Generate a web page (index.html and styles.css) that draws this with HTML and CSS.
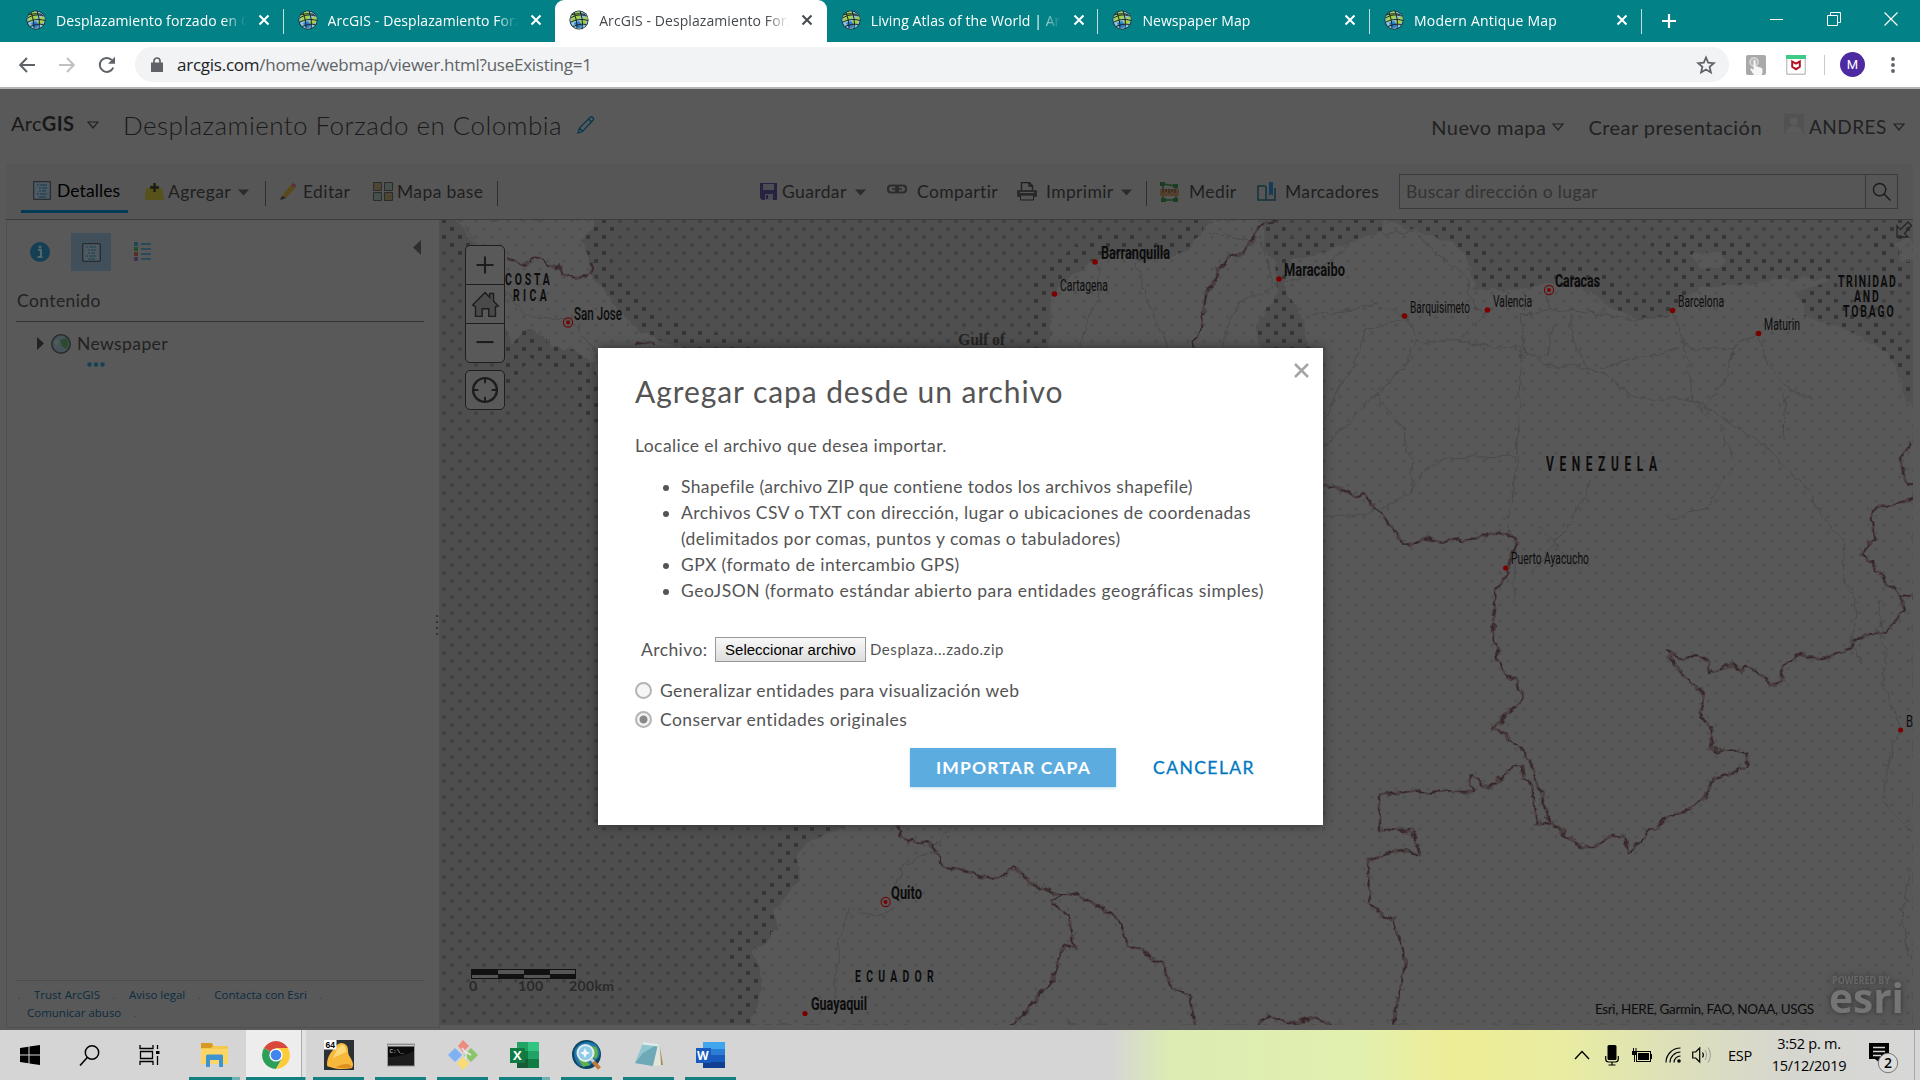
FILE: index.html
```html
<!DOCTYPE html>
<html lang="es">
<head>
<meta charset="utf-8">
<title>ArcGIS - Desplazamiento Forzado en Colombia</title>
<link rel="stylesheet" href="styles.css">
</head>
<body>
<svg class="defs" width="0" height="0">
  <symbol id="globe" viewBox="0 0 20 20">
    <circle cx="10" cy="10" r="9.600" fill="#1d2b2e"/>
    <circle cx="10" cy="10" r="8.800" fill="#8fc3e6"/>
    <path d="M2 7c2-4 6-6 9-5l1 5-4 4-5 1zM12 9l6-3c1 4 0 7-3 9l-4-1zM5 14l4 1v3c-2-1-3-2-4-4z" fill="#a3cf4a"/>
    <path d="M5 13l5-2 3 4-2 3c-3 0-5-2-6-5z" fill="#2b7fd0"/>
    <path d="M1.500 8c5-3 10-4 16-2M1 12.500c6-3 11-4 18-2M4 16.500c5-2 9-3 13-2M5 2.500c2 5 3 10 3 16M11 1c2 5 3 11 2 18M3 4.500c6-1 9-1 13 0" fill="none" stroke="#18262b" stroke-width="1"/>
  </symbol>
  <symbol id="x" viewBox="0 0 12 12"><path d="M1.500 1.500l9 9M10.500 1.500l-9 9" stroke="currentColor" stroke-width="2" fill="none"/></symbol>
  <symbol id="caret" viewBox="0 0 12 8"><path d="M1 1h10l-5 6z" fill="none" stroke="#222" stroke-width="1.200"/></symbol>
  <symbol id="down" viewBox="0 0 11 7"><path d="M0 .5h11l-5.500 6z" fill="#2b2b2b"/></symbol>
</svg>

<header class="tabs">
  <div class="tab"><svg class="fav"><use href="#globe"/></svg><span class="tab-title">Desplazamiento forzado en Colombia</span><svg class="tab-x"><use href="#x"/></svg></div>
  <div class="tab no-sep"><svg class="fav"><use href="#globe"/></svg><span class="tab-title">ArcGIS - Desplazamiento Forzado</span><svg class="tab-x"><use href="#x"/></svg></div>
  <div class="tab active"><svg class="fav"><use href="#globe"/></svg><span class="tab-title">ArcGIS - Desplazamiento Forzado</span><svg class="tab-x"><use href="#x"/></svg></div>
  <div class="tab"><svg class="fav"><use href="#globe"/></svg><span class="tab-title">Living Atlas of the World | ArcGIS</span><svg class="tab-x"><use href="#x"/></svg></div>
  <div class="tab"><svg class="fav"><use href="#globe"/></svg><span class="tab-title">Newspaper Map</span><svg class="tab-x"><use href="#x"/></svg></div>
  <div class="tab"><svg class="fav"><use href="#globe"/></svg><span class="tab-title wide">Modern Antique Map</span><svg class="tab-x"><use href="#x"/></svg></div>
  <svg class="newtab" viewBox="0 0 16 16"><path d="M8 1v14M1 8h14" stroke="#fff" stroke-width="2.200"/></svg>
  <div class="winctl">
    <svg viewBox="0 0 14 14"><path d="M0 7.500h13" stroke="#fff"/></svg>
    <svg viewBox="0 0 14 14"><path d="M.5 3.500h10v10h-10zM3.500 3.500v-3h10v10h-3" stroke="#fff" fill="none"/></svg>
    <svg viewBox="0 0 14 14"><path d="M.5 .5l13 13M13.500 .5l-13 13" stroke="#fff" stroke-width="1.200"/></svg>
  </div>
</header>

<nav class="navbar">
  <svg class="nav" viewBox="0 0 16 16"><path d="M16 8H1.500M8 1L1.200 8 8 15" fill="none" stroke="#5f6368" stroke-width="2"/></svg>
  <svg class="nav" viewBox="0 0 16 16"><path d="M0 8h14.500M8 1l6.800 7L8 15" fill="none" stroke="#bfc1c3" stroke-width="2"/></svg>
  <svg class="nav reload" viewBox="0 0 18 18"><path d="M15.300 11.500A7 7 0 1 1 14 4.200" fill="none" stroke="#5f6368" stroke-width="2"/><path d="M17 .8v7h-7z" fill="#5f6368"/></svg>
  <div class="omnibox">
    <svg class="lock" viewBox="0 0 12 15"><path d="M0 5.500h12v9.500H0z" fill="#5f6368"/><path d="M3 6V4a3 3 0 0 1 6 0v2" fill="none" stroke="#5f6368" stroke-width="1.700"/></svg>
    <span class="url t"><b>arcgis.com</b>/home/webmap/viewer.html?useExisting=1</span>
    <svg class="star" viewBox="0 0 20 20"><path d="M10 2.500l2.200 5.200 5.600.5-4.200 3.700 1.300 5.500L10 14.500l-4.900 2.900 1.300-5.500L2.200 8.200l5.600-.5z" fill="none" stroke="#5f6368" stroke-width="1.800"/></svg>
  </div>
  <div class="exts">
    <svg viewBox="0 0 20 20"><rect width="20" height="20" rx="2" fill="#a9a9a9"/><circle cx="8" cy="7" r="5" fill="#d0d0d0"/><circle cx="8" cy="7" r="3" fill="#b5b5b5"/><path d="M7.500 5.500q1-1 2 0V11l5 1.500q2 .5 2 2V18l-1 2H8l-4-6 1.500-.8 2 1.800z" fill="#f4f6f8"/></svg>
    <svg viewBox="0 0 20 20"><rect x=".7" y=".7" width="18.600" height="18.600" rx="1" fill="#fff" stroke="#c4c4c4" stroke-width="1.400"/><path d="M0 0h20v4H0z" fill="#3ecb86"/><path d="M6.200 6.500L10 8.700l3.800-2.200v5.300L10 14.200l-3.800-2.400z" fill="none" stroke="#b01020" stroke-width="2"/></svg>
  </div>
  <i class="navsep"></i>
  <span class="profile">M</span>
  <svg class="dots" viewBox="0 0 4 16"><circle cx="2" cy="2" r="1.900"/><circle cx="2" cy="8" r="1.900"/><circle cx="2" cy="14" r="1.900"/></svg>
</nav>

<main class="app">
  <header class="apphead">
    <span class="brand t">Arc<b>GIS</b></span>
    <svg class="caret"><use href="#caret"/></svg>
    <h1 class="t">Desplazamiento Forzado en Colombia</h1>
    <svg class="edit" viewBox="0 0 18 18"><path d="M1 17l1.500-5L13 1.500c1-1 2-.8 2.800 0s1 1.800 0 2.800L5.500 15.500zM11.500 3l3.200 3M2.500 12l3 3" fill="none" stroke="#08384f" stroke-width="1.300"/></svg>
    <div class="account">
      <span class="t">Nuevo mapa</span><svg class="caret"><use href="#caret"/></svg>
      <span class="present t">Crear presentación</span>
      <svg class="avatar" viewBox="0 0 20 20"><rect width="20" height="20" fill="#525252"/><circle cx="10" cy="8" r="4" fill="#5b5b5b"/><path d="M2 20c0-6 4-7 8-7s8 1 8 7z" fill="#5b5b5b"/></svg>
      <span class="user t">ANDRES</span><svg class="caret"><use href="#caret"/></svg>
    </div>
  </header>

  <div class="toolbar">
    <div class="tool current"><svg width="18" height="19" viewBox="0 0 18 19"><rect x=".7" y=".7" width="16.600" height="17.600" fill="#4d5963" stroke="#20242a"/><path d="M4 4h2M7 4h7M6 7h2M9 7h5M6 10h2M9 10h4M4 13h2M7 13h7M6 16h7" stroke="#123a4d"/></svg><span class="t">Detalles</span></div>
    <div class="tool add"><svg width="19" height="19" viewBox="0 0 19 19"><path d="M1 6h4v-3h8v3h4l2 12H0z" fill="#57511a"/><path d="M9.500 1v9M5 5.500h9" stroke="#1b1b1b" stroke-width="2.400"/></svg><span class="t">Agregar</span><svg class="down"><use href="#down"/></svg></div>
    <i class="vsep"></i>
    <div class="tool edit-tool"><svg width="16" height="18" viewBox="0 0 16 18"><path d="M2 13L11 2l4 3L6 15z" fill="#5a4a17"/><path d="M11 2l2-2 3 2-1 3z" fill="#55303a"/><path d="M0 17l2-4 4 2z" fill="#222"/></svg><span class="t">Editar</span></div>
    <div class="tool add"><svg width="20" height="19" viewBox="0 0 20 19"><path d="M.5 .5h8v8h-8zM11.500 10.500h8v8h-8z" fill="#4e4632" stroke="#2b2b2b"/><path d="M11.500 .5h8v8h-8zM.5 10.500h8v8h-8z" fill="#46504c" stroke="#2b2b2b"/></svg><span class="t">Mapa base</span></div>
    <i class="vsep"></i>
    <div class="tool save"><svg width="17" height="17" viewBox="0 0 17 17"><path d="M0 0h17v17H2l-2-2z" fill="#26223f"/><path d="M3 1h11v6H3z" fill="#4d4d55"/><path d="M5 11h8v6H5z" fill="#4d4d55"/><path d="M6 12h2v4H6z" fill="#26223f"/></svg><span class="t">Guardar</span><svg class="down"><use href="#down"/></svg></div>
    <div class="tool share"><svg class="raise" width="20" height="10" viewBox="0 0 20 10"><rect x="1" y="1.500" width="10" height="7" rx="3" fill="none" stroke="#2c2c2c" stroke-width="2"/><rect x="9" y="1.500" width="10" height="7" rx="3" fill="none" stroke="#2c2c2c" stroke-width="2"/><path d="M5 5h10" stroke="#2c2c2c" stroke-width="1.500"/></svg><span class="t">Compartir</span></div>
    <div class="tool print"><svg width="20" height="19" viewBox="0 0 20 19"><path d="M4.500 8V.7h8l3 3V8M12 1v3h3" fill="none" stroke="#1f1f1f" stroke-width="1.300"/><rect y="8" width="20" height="7" rx="1" fill="#2b2b2b"/><path d="M3 10.500h14" stroke="#555"/><path d="M3.500 13h13v5h-13z" fill="#555" stroke="#1f1f1f"/></svg><span class="t">Imprimir</span><svg class="down"><use href="#down"/></svg></div>
    <i class="vsep"></i>
    <div class="tool share"><svg width="19" height="20" viewBox="0 0 19 20"><path d="M3 2l13 2M3 18h13M3 2v16M16 4v14" stroke="#1b3d22" stroke-width="1.500"/><path d="M0 0h5v4H0zM13 2h5v4h-5zM1 16h5v4H1zM13 16h5v4h-5z" fill="#1b3d22"/><path d="M0 7h19v7H0z" fill="#54402c"/><path d="M3 7v4M6 7v3M9 7v4M12 7v3M15 7v4" stroke="#222"/></svg><span class="t">Medir</span></div>
    <div class="tool print"><svg width="19" height="20" viewBox="0 0 19 20"><path d="M1 4h6c2 0 2 1 2 1v13H1zM18 6v12H9" fill="none" stroke="#16333f" stroke-width="1.600"/><path d="M12 0h4v14l-2-2-2 2z" fill="#123c5a"/></svg><span class="t">Marcadores</span></div>
    <div class="search"><span class="t">Buscar dirección o lugar</span><svg viewBox="0 0 20 20"><circle cx="8" cy="8" r="6.500"/><path d="M12.500 12.500l7 7"/></svg></div>
  </div>

  <div class="work">
    <aside class="panel">
      <div class="ptabs">
        <svg class="info" viewBox="0 0 20 20"><circle cx="10" cy="10" r="10" fill="#143f55"/><path d="M8 8h3v6M7.500 15h5" stroke="#566" stroke-width="2" fill="none"/><circle cx="10" cy="5" r="1.500" fill="#566"/></svg>
        <span class="ptab"><svg width="19" height="19" viewBox="0 0 19 19"><rect x=".7" y=".7" width="17.600" height="17.600" rx="1" fill="#4f5962" stroke="#262b30" stroke-width="1.300"/><path d="M4 4h2M7 4h7M6 7h2M9 7h5M6 10h2M9 10h4M4 13h2M7 13h7M6 16h7" stroke="#1c4050"/></svg></span>
        <svg class="legend" width="17" height="20" viewBox="0 0 17 20"><path d="M0 0h4v4H0z" fill="#1d4a50"/><path d="M0 5h4v4H0z" fill="#274a2c"/><path d="M0 10h4v4H0z" fill="#55302a"/><path d="M0 15h4v4H0z" fill="#3e3050"/><path d="M7 2h10M7 7h10M7 12h10M7 17h10" stroke="#1c4659" stroke-width="1.500"/></svg>
        <svg class="collapse" width="8" height="15" viewBox="0 0 8 15"><path d="M8 0v15L0 7.500z" fill="#2f2f2f"/></svg>
      </div>
      <h2><span class="t">Contenido</span></h2>
      <div class="layer"><svg width="8" height="13" viewBox="0 0 8 13"><path d="M0 0l7 6.500-7 6.500z" fill="#222"/></svg><svg width="20" height="20" viewBox="0 0 20 20"><circle cx="10" cy="10" r="9.200" fill="#46525a" stroke="#2a2a2a" stroke-width="1.500"/><path d="M9 6l6-2c3 3 3 8 0 11l-4-3z" fill="#2c4a2e"/><path d="M3 8l4-3 1 4-3 3z" fill="#4f5f55"/></svg><span class="t">Newspaper</span></div>
      <svg class="more" width="18" height="5" viewBox="0 0 18 5"><circle cx="2.500" cy="2.500" r="2.200"/><circle cx="9" cy="2.500" r="2.200"/><circle cx="15.500" cy="2.500" r="2.200"/></svg>
      <footer class="links">
        <div><i>.</i><a class="t">Trust ArcGIS</a><i>.</i><a class="t">Aviso legal</a><i>.</i><a class="t">Contacta con Esri</a><i>.</i></div>
        <div class="second"><a class="t">Comunicar abuso</a><i>.</i></div>
      </footer>
      <span class="grip"></span>
    </aside>
    <section class="map">
      <svg class="canvas" width="1473" height="805" viewBox="440 220 1473 805">
        <defs>
          <pattern id="seadots" width="16" height="16" patternUnits="userSpaceOnUse"><circle cx="4" cy="5" r="2" fill="#404040"/><circle cx="12" cy="13" r="2" fill="#404040"/></pattern>
          <pattern id="coastdots" width="16" height="16" patternUnits="userSpaceOnUse"><rect x="2" y="3" width="4" height="4" rx="1" fill="#353535"/><rect x="10" y="11" width="4" height="4" rx="1" fill="#353535"/></pattern>
          <pattern id="landdots" width="16" height="16" patternUnits="userSpaceOnUse"><circle cx="4" cy="5" r="1.900" fill="#505050"/><circle cx="12" cy="13" r="1.900" fill="#505050"/></pattern>
          <filter id="rough" x="-5%" y="-5%" width="110%" height="110%"><feTurbulence type="fractalNoise" baseFrequency=".09" numOctaves="3" seed="4"/><feDisplacementMap in="SourceGraphic" scale="9" xChannelSelector="R" yChannelSelector="G"/></filter>
          <linearGradient id="sea" x1="0" x2="1"><stop offset="0" stop-color="#4e4e4e"/><stop offset="1" stop-color="#515151"/></linearGradient>
          <g id="land">
            <path d="M455 220L469 236 490 268 506 293 500 320 512 345 524 330 533 328 550 345 575 350 594 362 600 400H760L740 360 680 348 643 333 624 317 604 290 592 273 584 240 594 220z"/>
            <path d="M750 1025L759 1000 761 973 751 950 767 943 777 927 775 910 801 877 796 853 804 842 842 828 880 780 1000 600 1040 400 1049 347 1053 293 1072 277 1096 258 1120 255 1150 262 1190 250 1204 228 1212 220H1264L1262 250 1275 262 1278 288 1256 327 1262 355H1312L1298 310 1284 288 1290 262 1330 250 1360 240 1383 231 1385 220H1390L1411 230 1435 237 1454 243 1468 260 1475 290 1510 290 1553 285 1590 290 1609 307 1642 320 1671 313 1699 287 1737 285 1789 278 1831 280 1798 293 1803 317 1841 327 1864 340 1888 353 1902 383 1909 403 1913 410V1025z"/>
            <path d="M1690 256l20-5 17 6-6 10-20 2z"/><path d="M1895 243l12-6 6 3v20l-10 4z"/>
          </g>
          <g id="borders" fill="none" stroke-linejoin="round">
            <path d="M505 258L523 265 537 257 553 265 564 274 579 279 592 273V262M638 346L640 342 655 345"/>
            <path d="M1277 220L1260 225 1251 240 1244 253 1232 255 1218 270 1206 297 1201 327 1192 350"/>
            <path d="M1315 484L1333 486 1357 496 1364 493 1404 543 1411 545 1423 538 1444 542 1480 538 1494 532 1510 535 1516 543 1510 557 1508 575 1494 590 1495 610 1493 633 1498 657 1507 677 1515 678 1524 698 1492 730 1504 732 1515 743 1529 757 1535 777 1543 800 1549 820 1580 847 1594 847 1611 836 1623 836 1627 853 1647 833 1666 818 1692 808 1709 793 1711 780 1747 768V752L1711 750 1712 733 1700 712 1704 693 1684 677 1666 650 1678 658 1704 657 1709 671 1733 665 1741 672 1745 665 1762 673 1772 686 1784 682V663L1802 653 1819 660 1851 648 1855 640 1872 633H1884L1892 623 1906 610 1900 597 1860 552 1874 540 1871 510 1888 505 1916 498"/>
            <path d="M1900 597l16-1M1911 443L1900 460 1906 483 1916 483"/>
            <path d="M1549 822L1536 826 1537 820 1532 785 1524 780 1522 765 1515 767 1500 778 1489 788 1473 775 1469 785 1473 793 1395 792 1380 794V830L1410 830 1416 838 1420 856 1400 850 1369 860 1370 905 1392 920 1404 950 1405 968 1392 1028"/>
            <path d="M890 815L895 825 906 840 933 845 943 867 960 869 981 877 1005 877 1013 867 1037 887 1061 895 1077 894 1110 913 1120 923 1128 945 1163 963 1171 988 1190 997 1195 1028M1061 897L1051 900 1072 923 1074 947 1064 945 1053 980 1010 1028M1252 1028L1270 1015 1290 1024 1315 1018 1336 1028"/>
          </g>
        </defs>
        <rect x="440" y="220" width="1473" height="805" fill="url(#sea)"/>
        <rect x="440" y="220" width="1473" height="805" fill="url(#seadots)"/>
        <use href="#land" fill="url(#coastdots)" stroke="url(#coastdots)" stroke-width="44"/>
        <use href="#land" fill="#585858" filter="url(#rough)"/>
        <use href="#land" fill="url(#landdots)"/>
        <g fill="none" stroke="#474747" stroke-width=".9" filter="url(#rough)">
          <path d="M1209 233l50 10 12 30 2 15M1274 288l-35 14-15 30v20M1360 230l-20 25-35 22-20 5M1383 235l28-4 30 25 26 22 7 30 13 5M1312 315l40-5 25-6 28 12 12 20M1417 342h45l20 3 40 4 14 8 10 9h35l25 9 22 18 25 8 28-3 20 5 35 25 28 15 25 30 22 18 12 28 22 20-3 35 15 30-6 40 12 20M1405 318l-40 12-10 35-20 30-12 30M1417 340l-15 30-30 28-48 50M1372 388l30 40 10 35v30l-46 22-43 2M1412 490l15-22 22-10 65-2M1522 350l-2 25-3 70-5 60-8 15 10 20v60M1549 290l-1 20-28 5 5 40M1549 310l40 2 45 8 35-5M1672 312l12 30 10 60 14 15M1680 342l20 8h30l28-17M1758 335l10 30 22 25 25 10M1735 345l-10 35-22 30M1600 368l50-12 30-8M1580 570l-40-45M1720 425l15 40-18 22-8 20-40 12M1590 480l-18 40-18 24-20 25M1785 390l-2 50M1545 355l10-30M1570 315l6 35 12 20M1487 312l-25 25"/>
          <path d="M1879 600l2 35 5 20-4 30 10 20 8 25-8 15-10 55 20 20 12 14M1910 870l-8 40 8 50M1097 262l3 30-12 25-8 30M1136 262l10 35 22 50M505 290l20 25 40 5 10 5 15 20 15 20M955 825l-25 25-28 18-4 18M890 910l-10 8-30-10-10 30-6 60M465 225l15 25"/>
        </g>
        <g filter="url(#rough)"><use href="#borders" stroke="#4b3f41" stroke-width="3"/><use href="#borders" stroke="#34272a" stroke-width="1.500" stroke-dasharray="9 5"/></g>
        <g fill="#7a0000">
          <circle cx="1095" cy="262" r="2.800"/><circle cx="1054.500" cy="294" r="2.800"/><circle cx="1279" cy="279" r="2.800"/><circle cx="1404.500" cy="316" r="2.800"/><circle cx="1487.500" cy="310" r="2.800"/><circle cx="1672.600" cy="310.500" r="2.800"/><circle cx="1758.600" cy="333.500" r="2.800"/><circle cx="1505.500" cy="568" r="2.500"/><circle cx="1900.600" cy="730" r="2.500"/><circle cx="805" cy="1013.500" r="2.600"/>
          <circle cx="568" cy="322.500" r="1.900"/><circle cx="1549" cy="290" r="1.900"/><circle cx="885.600" cy="902" r="1.900"/>
          <g fill="none" stroke="#6d0808" stroke-width="1.100"><circle cx="568" cy="322.500" r="4.600"/><circle cx="1549" cy="290" r="4.600"/><circle cx="885.600" cy="902" r="4.600"/></g>
        </g>
        <g class="country">
          <text transform="translate(505 285) scale(.65 1)" textLength="69">COSTA</text>
          <text transform="translate(513 301) scale(.65 1)" textLength="52">RICA</text>
          <text transform="translate(1838 287) scale(.65 1)" textLength="89">TRINIDAD</text>
          <text transform="translate(1854 302) scale(.65 1)" textLength="38">AND</text>
          <text transform="translate(1843 317) scale(.65 1)" textLength="78">TOBAGO</text>
          <text transform="translate(855 982) scale(.65 1)" textLength="121">ECUADOR</text>
          <text class="big" transform="translate(1546 471) scale(.6 1)" textLength="185">VENEZUELA</text>
        </g>
        <g class="city major">
          <text x="574" y="320" textLength="48" lengthAdjust="spacingAndGlyphs" font-weight="500">San Jose</text><text x="1101" y="259" textLength="69" lengthAdjust="spacingAndGlyphs">Barranquilla</text><text x="1284" y="276" textLength="61" lengthAdjust="spacingAndGlyphs">Maracaibo</text><text x="1555" y="287" textLength="45" lengthAdjust="spacingAndGlyphs">Caracas</text><text x="891" y="899" textLength="31" lengthAdjust="spacingAndGlyphs">Quito</text><text x="811" y="1010" textLength="56" lengthAdjust="spacingAndGlyphs">Guayaquil</text>
        </g>
        <g class="city">
          <text x="1060" y="291" textLength="48" lengthAdjust="spacingAndGlyphs">Cartagena</text><text x="1410" y="313" textLength="60" lengthAdjust="spacingAndGlyphs">Barquisimeto</text><text x="1493" y="307" textLength="39" lengthAdjust="spacingAndGlyphs">Valencia</text><text x="1678" y="307" textLength="46" lengthAdjust="spacingAndGlyphs">Barcelona</text><text x="1764" y="330" textLength="36" lengthAdjust="spacingAndGlyphs">Maturin</text><text x="1511" y="564" textLength="78" lengthAdjust="spacingAndGlyphs">Puerto Ayacucho</text><text x="1906" y="727" textLength="7" lengthAdjust="spacingAndGlyphs">B</text>
        </g>
        <text class="gulf" x="958" y="345" textLength="47">Gulf of</text>
        <g class="scale"><rect x="471.500" y="969.500" width="104" height="9" fill="#555" stroke="#111"/><path d="M472 970h26v5h-26zM498 974h26v5h-26zM524 970h26v5h-26zM550 974h25v5h-25z" fill="#111"/><text x="469" y="991">0</text><text x="518" y="991" textLength="25">100</text><text x="569" y="991" textLength="45">200km</text></g>
        <text class="attrib" x="1595" y="1014" textLength="219">Esri, HERE, Garmin, FAO, NOAA, USGS</text>
        <g class="logo"><text class="pow" x="1832" y="984" textLength="58" lengthAdjust="spacingAndGlyphs">POWERED BY</text><text class="esri" x="1829" y="1013" textLength="75" lengthAdjust="spacingAndGlyphs">esri</text></g>
        <path d="M1897 226v11h11l-3.500-3.500 7-8-3.500-3.500-7.500 7.500z" fill="none" stroke="#262626" stroke-width="1.300"/>
      </svg>
      <div class="zoom">
        <svg viewBox="0 0 40 38"><path d="M20 10v18M11 19h18" stroke="#1d1d1d" stroke-width="2.200"/></svg>
        <svg viewBox="0 0 40 38"><path d="M7 20L20 7l5 5V8h4v8l5 5-3 1v10h-7v-8h-7v8h-7V22z" fill="#4a4a4a" stroke="#1d1d1d" stroke-width="1.500"/></svg>
        <svg viewBox="0 0 40 38"><path d="M11 18h18" stroke="#1d1d1d" stroke-width="2.200"/></svg>
      </div>
      <div class="zoom locate"><svg viewBox="0 0 40 38"><circle cx="20" cy="19" r="12.500" fill="none" stroke="#1d1d1d" stroke-width="2.500"/><path d="M20 6v6M20 26v6M7 19h6M27 19h6" stroke="#1d1d1d" stroke-width="2"/></svg></div>
    </section>
  </div>
</main>

<section class="dialog">
  <svg class="close" viewBox="0 0 15 15"><path d="M1 1l13 13M14 1L1 14" stroke="#a5a5a5" stroke-width="2.500"/></svg>
  <h3>Agregar capa desde un archivo</h3>
  <p>Localice el archivo que desea importar.</p>
  <ul>
    <li>Shapefile (archivo ZIP que contiene todos los archivos shapefile)</li>
    <li>Archivos CSV o TXT con dirección, lugar o ubicaciones de coordenadas<br>(delimitados por comas, puntos y comas o tabuladores)</li>
    <li>GPX (formato de intercambio GPS)</li>
    <li>GeoJSON (formato estándar abierto para entidades geográficas simples)</li>
  </ul>
  <div class="file"><label>Archivo:</label><button>Seleccionar archivo</button><span class="fname">Desplaza...zado.zip</span></div>
  <div class="radio"><i></i><span>Generalizar entidades para visualización web</span></div>
  <div class="radio on"><i></i><span>Conservar entidades originales</span></div>
  <div class="actions"><span class="import">IMPORTAR CAPA</span><span class="cancel">CANCELAR</span></div>
</section>

<footer class="taskbar">
  <div class="sys">
    <svg width="20" height="20" viewBox="0 0 20 20"><path d="M0 3l8.500-1.200V9.500H0zM9.500 1.600L20 0v9.500H9.500zM0 10.500h8.500v7.700L0 17zM9.500 10.500H20V20L9.500 18.400z"/></svg>
    <svg width="21" height="21" viewBox="0 0 21 21"><circle cx="13" cy="7.500" r="6.700" fill="none" stroke="#000" stroke-width="1.500"/><path d="M8.300 12.500L1 20.500" stroke="#000" stroke-width="1.600"/></svg>
    <svg width="22" height="20" viewBox="0 0 22 20"><path d="M1 0v3.500h13V0M1 20v-3.500h13V20M1.500 6.500h12v7h-12zM18.500 0v4M18.500 11v9" fill="none" stroke="#000" stroke-width="1.300"/><path d="M17 6h3.500v3H17z"/></svg>
  </div>
  <div class="apps">
    <span class="multi"><svg viewBox="0 0 30 30"><path d="M1 3h11l2 3h14v18H1z" fill="#f6c94e"/><path d="M1 3h11l1 3-2 2H1z" fill="#d69a22"/><path d="M1 9h27v15H1z" fill="#fbd667"/><path d="M6 16q0-1.500 1.500-1.500h14q1.500 0 1.500 1.500v11h-4v-7h-9v7H6z" fill="#3f93cf"/></svg></span>
    <span class="active multi"><svg viewBox="0 0 30 30"><circle cx="15" cy="15" r="14" fill="#fff"/><path d="M15 15L2.900 8A14 14 0 0 1 27.100 8H15z" fill="#d8493b"/><path d="M15 15L2.900 8A14 14 0 0 0 15 29l6-10.500z" fill="#2e9f58"/><path d="M15 8h12.100A14 14 0 0 1 15 29l6-10.500z" fill="#fccb3a"/><circle cx="15" cy="15" r="6.600" fill="#fff"/><circle cx="15" cy="15" r="5.300" fill="#4484ef"/></svg></span>
    <span><svg viewBox="0 0 30 30"><rect width="30" height="30" fill="#2c3137"/><path d="M3 25C3 15 8 12 12 6c3-4 8-4 11 0 2 4 0 7 3 11 3 5 4 8 2 11-8 2-18 1-22-1-2 0-3-1-3-2z" fill="#f8b83c"/><path d="M9 18c2-5 4-9 8-13 4-1 5 4 5 7" fill="#fdd87a"/><path d="M12 27c6 2 12 1 16 0-2-4-8-4-16 0z" fill="#e08e1e"/><rect width="12.500" height="9.500" fill="#fff"/><text x="1.500" y="8" font-size="8.500" font-weight="700" font-family="Liberation Sans">64</text></svg></span>
    <span><svg viewBox="0 0 30 30"><rect x="1.500" y="4" width="27" height="22" fill="#0b0b0b" stroke="#9a9a9a"/><path d="M2 4.500h26v2H2z" fill="#c9c9c9"/><path d="M2 17q14 0 26-6v14H2z" fill="#1d1d1d"/><text x="3.500" y="12.500" font-size="6" fill="#ddd" font-family="Liberation Mono">C:\_</text></svg></span>
    <span><svg viewBox="0 0 30 30"><path d="M15 0l6 6-6 6-5-6z" fill="#f08a80"/><path d="M7 8l7 7-7 7-7-7z" fill="#7fb2f5"/><path d="M23 8l7 7-7 7-7-7z" fill="#8cc468"/><path d="M15 17l6 6.500-6 6.500-6-6.500z" fill="#fbdc74"/><path d="M14 8l4 5v6M18 12l5 3" stroke="#e8e8e8" stroke-width="1.500" fill="none"/></svg></span>
    <span class="multi"><svg viewBox="0 0 30 30"><path d="M7 2h22v26H7z" fill="#21a366"/><path d="M18 2h11v9H18z" fill="#33c481"/><path d="M7 11h11v8H7zM18 19h11v9H18z" fill="#107c41"/><path d="M7 19h11v9H7z" fill="#185c37"/><path d="M0 8h15v15H0z" fill="#107c41"/><text x="3" y="20" font-size="13" font-weight="700" fill="#fff" font-family="Open Sans">X</text></svg></span>
    <span><svg viewBox="0 0 30 30"><circle cx="14.500" cy="14.500" r="14.500" fill="#0d4566"/><path d="M3 9c4-7 14-9 20-5 5 4 6 10 3 14l-9 8H8C3 22 1 15 3 9z" fill="#2379ad"/><path d="M19 6l5 1c3 4 2 9 0 12l-5-3zM6 19l8 1 4 5-7 2z" fill="#5fb04c"/><circle cx="13.500" cy="13" r="8" fill="#8fcbe6" stroke="#e2edf2" stroke-width="2"/><path d="M13 8l1.500 3.500L18 13l-3.500 1.500L13 18l-1.500-3.500L8 13l3.500-1.500z" fill="#f4fbff"/><path d="M19 19l3 3" stroke="#ccc" stroke-width="3"/><path d="M21.500 22l6 6.500" stroke="#c17a3a" stroke-width="4"/></svg></span>
    <span><svg viewBox="0 0 30 30"><path d="M9 3l15 2-5 21-18-3z" fill="#8fc5cf"/><path d="M24 4l5 21-11 1z" fill="#e3e4dc"/><path d="M26 7l3 18h-2z" fill="#a08c50"/><path d="M24 4l-5 22-18-3 8-10z" fill="#6fa9b8"/><path d="M9 2l16 2-.5 2.500L8 4.500z" fill="#dfe8ea"/></svg></span>
    <span><svg viewBox="0 0 30 30"><path d="M7 2h22v26H7z" fill="#2b7cd3"/><path d="M7 2h22v7H7z" fill="#41a5ee"/><path d="M7 15h22v7H7z" fill="#185abd"/><path d="M7 22h22v6H7z" fill="#103f91"/><path d="M0 8h15v15H0z" fill="#185abd"/><text x="1" y="20" font-size="12" font-weight="700" fill="#fff" font-family="Open Sans">W</text></svg></span>
  </div>
  <div class="tray">
    <svg width="16" height="10" viewBox="0 0 16 10"><path d="M1 9l7-7.500L15 9" fill="none" stroke="#000" stroke-width="1.400"/></svg>
    <svg class="mic" width="14" height="21" viewBox="0 0 14 21"><rect x="2.500" width="9" height="15" rx="1.500"/><path d="M.7 11v3c0 2 1 3 3 3h6.600c2 0 3-1 3-3v-3M7 17v3M3.500 20h7" fill="none" stroke="#000" stroke-width="1.200"/></svg>
    <svg class="bat" width="20" height="15" viewBox="0 0 20 15"><rect x="4.500" y="3.500" width="14" height="10" fill="none" stroke="#000"/><path d="M6 5h11v7H6zM18.500 6H20v5h-1.500zM0 3h5v4H3v7H2V7H0zM1 0h1v3H1zM3.500 0h1v3h-1z"/></svg>
    <svg class="wifi" width="16" height="16" viewBox="0 0 16 16"><g fill="none" stroke="#000" stroke-width="1.200"><path d="M1 15.500A14.500 14.500 0 0 1 15.500 1M5 15.500A10.500 10.500 0 0 1 15.500 5M9 15.500A6.500 6.500 0 0 1 15.500 9"/></g><circle cx="14" cy="14" r="1.800"/></svg>
    <svg class="vol" width="20" height="18" viewBox="0 0 20 18"><path d="M.7 6h3l4-4v14l-4-4h-3z" fill="none" stroke="#000" stroke-width="1.200"/><path d="M10.500 6.500c1 1.500 1 3.500 0 5" stroke="#000" fill="none" stroke-width="1.200"/><path d="M13 4c2 3 2 7 0 10M16 1.500c3 4.500 3 10.500 0 15" stroke="#999" fill="none"/></svg>
    <span class="lang t">ESP</span>
    <div class="clock"><span class="t">3:52 p. m.</span><span class="t">15/12/2019</span></div>
    <svg class="notif" width="31" height="32" viewBox="0 0 31 32"><path d="M0 0h20v16H11v4l-5-4H0z"/><path d="M4 4.500h12M4 8.500h12M4 12.500h8" stroke="#d5d5d5" stroke-width="1.300"/><circle cx="19" cy="20" r="9.700" fill="#dcdcdc" stroke="#777"/><text x="15" y="25.200" font-family="Open Sans" font-size="14" font-weight="600">2</text></svg>
    <i class="peek"></i>
  </div>
</footer>
</body>
</html>
```
FILE: styles.css
```css
* { box-sizing: border-box; }
body { margin: 0; width: 1920px; height: 1080px; overflow: hidden; display: flex; flex-direction: column; font-family: "Lato", sans-serif; background: #595959; color: #222; position: relative; }
svg { display: block; flex: none; }
.t { white-space: nowrap; display: inline-block; }
.defs { position: absolute; }
h1, h2, h3, p, ul { margin: 0; padding: 0; font-weight: 400; }

.tabs { height: 42px; background: #028287; display: flex; padding-left: 12px; color: #fff; flex: none; font-family: "Open Sans", sans-serif; font-size: 14px; letter-spacing: .08px; }
.tab { width: 271.600px; height: 42px; display: flex; align-items: center; padding: 0 0 2px 14px; position: relative; }
.tab::after { content: ""; position: absolute; right: 0; top: 9px; width: 1px; height: 25px; background: #bfe0e1; }
.tab.no-sep::after { display: none; }
.tab.active { background: #fff; color: #45494d; border-radius: 9px 9px 0 0; }
.tab.active::after { display: none; }
.fav { width: 20px; height: 20px; }
.tab-title { margin-left: 10px; width: 192px; overflow: hidden; white-space: nowrap; -webkit-mask-image: linear-gradient(90deg, #000 87%, transparent 99%); mask-image: linear-gradient(90deg, #000 87%, transparent 99%); }
.tab-title.wide { letter-spacing: .23px; }
.tab-x { width: 12px; height: 12px; margin-left: 10px; }
.newtab { width: 16px; height: 16px; margin: 13px 0 0 19px; }
.winctl { display: flex; gap: 43px; margin-left: auto; padding: 12px 22px 0 0; }
.winctl svg { width: 14px; height: 14px; }

.navbar { height: 47px; flex: none; background: #fff; border-bottom: 2px solid #b3b3b3; display: flex; align-items: center; padding-left: 19px; }
.nav { width: 16px; height: 16px; margin-right: 24px; }
.reload { width: 18px; height: 18px; margin: 0 19px 0 -1px; }
.omnibox { width: 1594px; height: 35px; border-radius: 18px; background: #f1f3f4; display: flex; align-items: center; padding: 0 13px 0 16px; font: 17px "Open Sans", sans-serif; letter-spacing: -.25px; color: #5f6368; }
.omnibox b { font-weight: 400; color: #202124; }
.lock { width: 12px; height: 15px; margin-right: 14px; }
.star { width: 20px; height: 20px; margin-left: auto; }
.exts { display: flex; gap: 20px; margin-left: 17px; }
.exts svg { width: 20px; height: 20px; }
.navsep { width: 1px; height: 20px; background: #c8cacc; margin: 0 15px 0 18px; }
.profile { width: 25px; height: 25px; border-radius: 50%; background: #4d2aa1; color: #fff; font: 13px/25px "Roboto", sans-serif; text-align: center; }
.dots { width: 4px; height: 16px; margin-left: 26px; fill: #5f6368; }

.app { height: 941px; flex: none; background: #595959; }
.apphead { height: 75px; display: flex; align-items: center; padding: 0 15px 4px 11px; }
.brand { font-size: 20px; color: #181818; margin-bottom: 3px; width: 66px; letter-spacing: .3px; }
.caret { width: 12px; height: 8px; margin-left: 10px; }
.apphead h1 { font-size: 26px; font-weight: 300; color: #1a1a1a; margin-left: 24px; width: 438px; letter-spacing: .45px; }
.edit { width: 18px; height: 18px; margin-left: 16px; }
.account { margin-left: auto; display: flex; align-items: center; font-size: 20px; letter-spacing: .45px; padding-top: 4px; }
.account .caret { margin-left: 6px; }
.present { margin: 0 22px 0 24px; }
.avatar { width: 20px; height: 21px; margin: -7px 5px 0 0; }
.user { font-size: 19px; width: 78px; }

.toolbar { margin: 0 7px 0 6px; height: 56px; background: #565656; border-bottom: 1px solid #3c3c3c; padding-left: 15px; display: grid; grid-template-columns: 124px 120px 15px 93px 124px 263px 127px 130px 129px 14px 97px 142px 499px; font-size: 17.500px; letter-spacing: .38px; color: #1f1f1f; }
.tool { display: flex; align-items: center; height: 55px; }
.tool.current { width: 107px; height: 49px; padding: 6px 0 0 12px; gap: 6px; color: #000; border-bottom: 3px solid #043a56; letter-spacing: .1px; }
.add { gap: 4px; }
.edit-tool { gap: 7px; }
.save { gap: 5px; }
.share { gap: 10px; }
.print { gap: 9px; }
.raise { margin-top: -5px; }
.down { width: 11px; height: 7px; margin-top: 2px; }
.add .down, .save .down { margin-left: 3px; }
.print .down { margin-left: -2px; }
.vsep { width: 1px; height: 25px; background: #2e2e2e; margin-top: 17px; }
.search { height: 35px; margin-top: 10px; border: 1px solid #3a3a3a; display: flex; align-items: center; padding-left: 6px; color: #333; }
.search svg { width: 32px; height: 33px; margin-left: auto; border-left: 1px solid #3a3a3a; padding: 6px; fill: none; stroke: #1c1c1c; stroke-width: 1.500; }

.work { display: flex; height: 810px; padding-left: 6px; }
.panel { width: 434px; height: 808px; border: 1px solid #4f4f4f; border-top: 0; display: flex; flex-direction: column; position: relative; }
.ptabs { display: flex; align-items: center; height: 38px; margin-top: 13px; padding-left: 23px; }
.info { width: 20px; height: 20px; margin-right: 21px; }
.ptab { width: 40px; height: 38px; background: #414f5b; display: grid; place-items: center; margin-right: 23px; }
.collapse { margin: -10px 0 0 262px; }
.panel h2 { font-size: 17.500px; letter-spacing: .4px; line-height: 24px; margin: 18px 15px 0 9px; padding: 0 0 8px 1px; border-bottom: 1px solid #333; }
.layer { display: flex; align-items: center; font-size: 17.500px; letter-spacing: .4px; padding: 11px 0 0 30px; gap: 6px; }
.more { margin: 8px 0 0 80px; fill: #143f55; }
.links { margin: auto 14px 5px 9px; border-top: 1px solid #4c4c4c; padding: 5px 0 0 2px; font: 11.500px/18px "Open Sans", sans-serif; color: #0b2c40; }
.links div { display: flex; }
.links i { width: 29px; padding-left: 13px; color: #444; }
.links i:first-child { width: 16px; padding-left: 0; }
.links .second { padding-left: 9px; }
.grip { position: absolute; left: 429px; top: 395px; width: 2px; height: 22px; background: repeating-linear-gradient(#333 0 2px, transparent 2px 6px); }
.map { position: relative; width: 1473px; height: 805px; }
.zoom { position: absolute; left: 25px; top: 25px; width: 40px; border: 1px solid #1e1e1e; border-radius: 5px; background: #595959; }
.zoom svg { height: 38px; width: 38px; }
.zoom svg + svg { border-top: 1px solid #1e1e1e; height: 39px; }
.locate { top: 150px; }
.map text { fill: #0c0c0c; }
.country { font: 700 16px "Roboto", sans-serif; }
.country .big { font-size: 20px; }
.city { font: 400 17px "Roboto", sans-serif; }
.major { font-weight: 700; font-size: 18px; }
.gulf { font: 700 16px "Liberation Serif", serif; }
.map .gulf { fill: #242424; }
.scale { font: 700 14px "Lato", sans-serif; }
.map .scale text { fill: #2a2a2a; }
.attrib { font: 13.500px "Lato", sans-serif; }
.logo { font-family: "Open Sans", sans-serif; font-weight: 700; filter: drop-shadow(0 0 3px #333); }
.map .pow { font-size: 10px; fill: #666; }
.map .esri { font-size: 42px; fill: #757575; }

.dialog { position: absolute; left: 598px; top: 348px; width: 725px; height: 477px; background: #fff; padding: 23px 37px 0; color: #545454; font-size: 17.500px; letter-spacing: .42px; white-space: nowrap; box-shadow: 0 0 10px rgba(0,0,0,.45); }
.close { position: absolute; left: 696px; top: 15px; width: 15px; height: 15px; }
.dialog h3 { font-size: 30px; line-height: 40px; letter-spacing: .92px; }
.dialog p { line-height: 26px; margin-top: 22px; }
.dialog ul { line-height: 26px; margin-top: 15px; padding-left: 46px; }
.dialog li:nth-child(1) { letter-spacing: .36px; }
.dialog li:nth-child(2) { letter-spacing: .44px; }
.dialog li:nth-child(4) { letter-spacing: .49px; }
.file { display: flex; align-items: center; height: 26px; margin: 32px 0 0 6px; }
.file label { width: 65px; margin-right: 9px; }
.file button { width: 151px; height: 25px; padding: 0; border: 1px solid #999; background: linear-gradient(#f8f8f8, #ddd); font: 15px "Liberation Sans", sans-serif; color: #000; }
.fname { font-size: 15px; margin-left: 4px; letter-spacing: .56px; }
.radio { display: flex; align-items: center; height: 29px; margin-top: 14px; }
.radio i { width: 17px; height: 17px; border: 2px solid #b4b4b4; border-radius: 50%; background: #f6f6f6; margin-right: 8px; }
.radio.on { margin-top: 0; }
.radio.on i { background: radial-gradient(circle, #888 0 3.500px, #f2f2f2 4.500px); }
.actions { display: flex; align-items: center; margin: 14px 0 0 275px; font-weight: 700; }
.import { width: 206px; height: 39px; padding-left: 1px; background: #5dacdf; color: #fff; display: grid; place-items: center; letter-spacing: 1.120px; box-shadow: 0 1px 3px #bfe0f2; }
.cancel { color: #0079c1; margin-left: 37px; font-weight: 400; letter-spacing: 1.440px; -webkit-text-stroke: .3px #0079c1; }

.taskbar { height: 50px; flex: none; display: flex; position: relative; background: linear-gradient(90deg, #d5d5d5 0 1110px, #dcecb3 1170px, #e2f0ae 1360px, #eeed96 1452px, #e9eda0 1560px, #dddfbb 1680px, #d6d6d0 1790px, #d7d7d7); }
.sys { display: flex; align-items: center; gap: 39px; width: 189px; padding-left: 20px; }
.apps { display: flex; gap: 11px; }
.apps span { width: 51px; height: 50px; display: flex; justify-content: center; align-items: center; border-bottom: 3px solid #127f81; padding-top: 3px; }
.apps svg { width: 30px; height: 30px; }
.apps .multi { border-image: linear-gradient(90deg, #127f81 80%, #6fb0b0 80%) 3; }
.apps .active { width: 60px; margin: 0 -4px 0 -5px; background: linear-gradient(90deg, #ededed 55px, #aaa 55px 56px, #e2e2e2 56px); border-image: linear-gradient(90deg, #127f81 93%, #6fb0b0 93%) 3; }
.tray { margin-left: auto; width: 346px; display: flex; align-items: center; font: 14.500px "Open Sans", sans-serif; color: #000; letter-spacing: -.25px; }
.mic { margin-left: 15px; }
.bat { margin-left: 13px; }
.wifi { margin-left: 13px; }
.vol { margin-left: 11px; }
.lang { margin-left: 16px; }
.clock { width: 90px; margin-left: 12px; display: grid; line-height: 22px; justify-items: center; }
.notif { margin: 8px 0 0 15px; }
.peek { width: 1px; height: 50px; margin-left: auto; margin-right: 5px; background: #aaa; }
```
